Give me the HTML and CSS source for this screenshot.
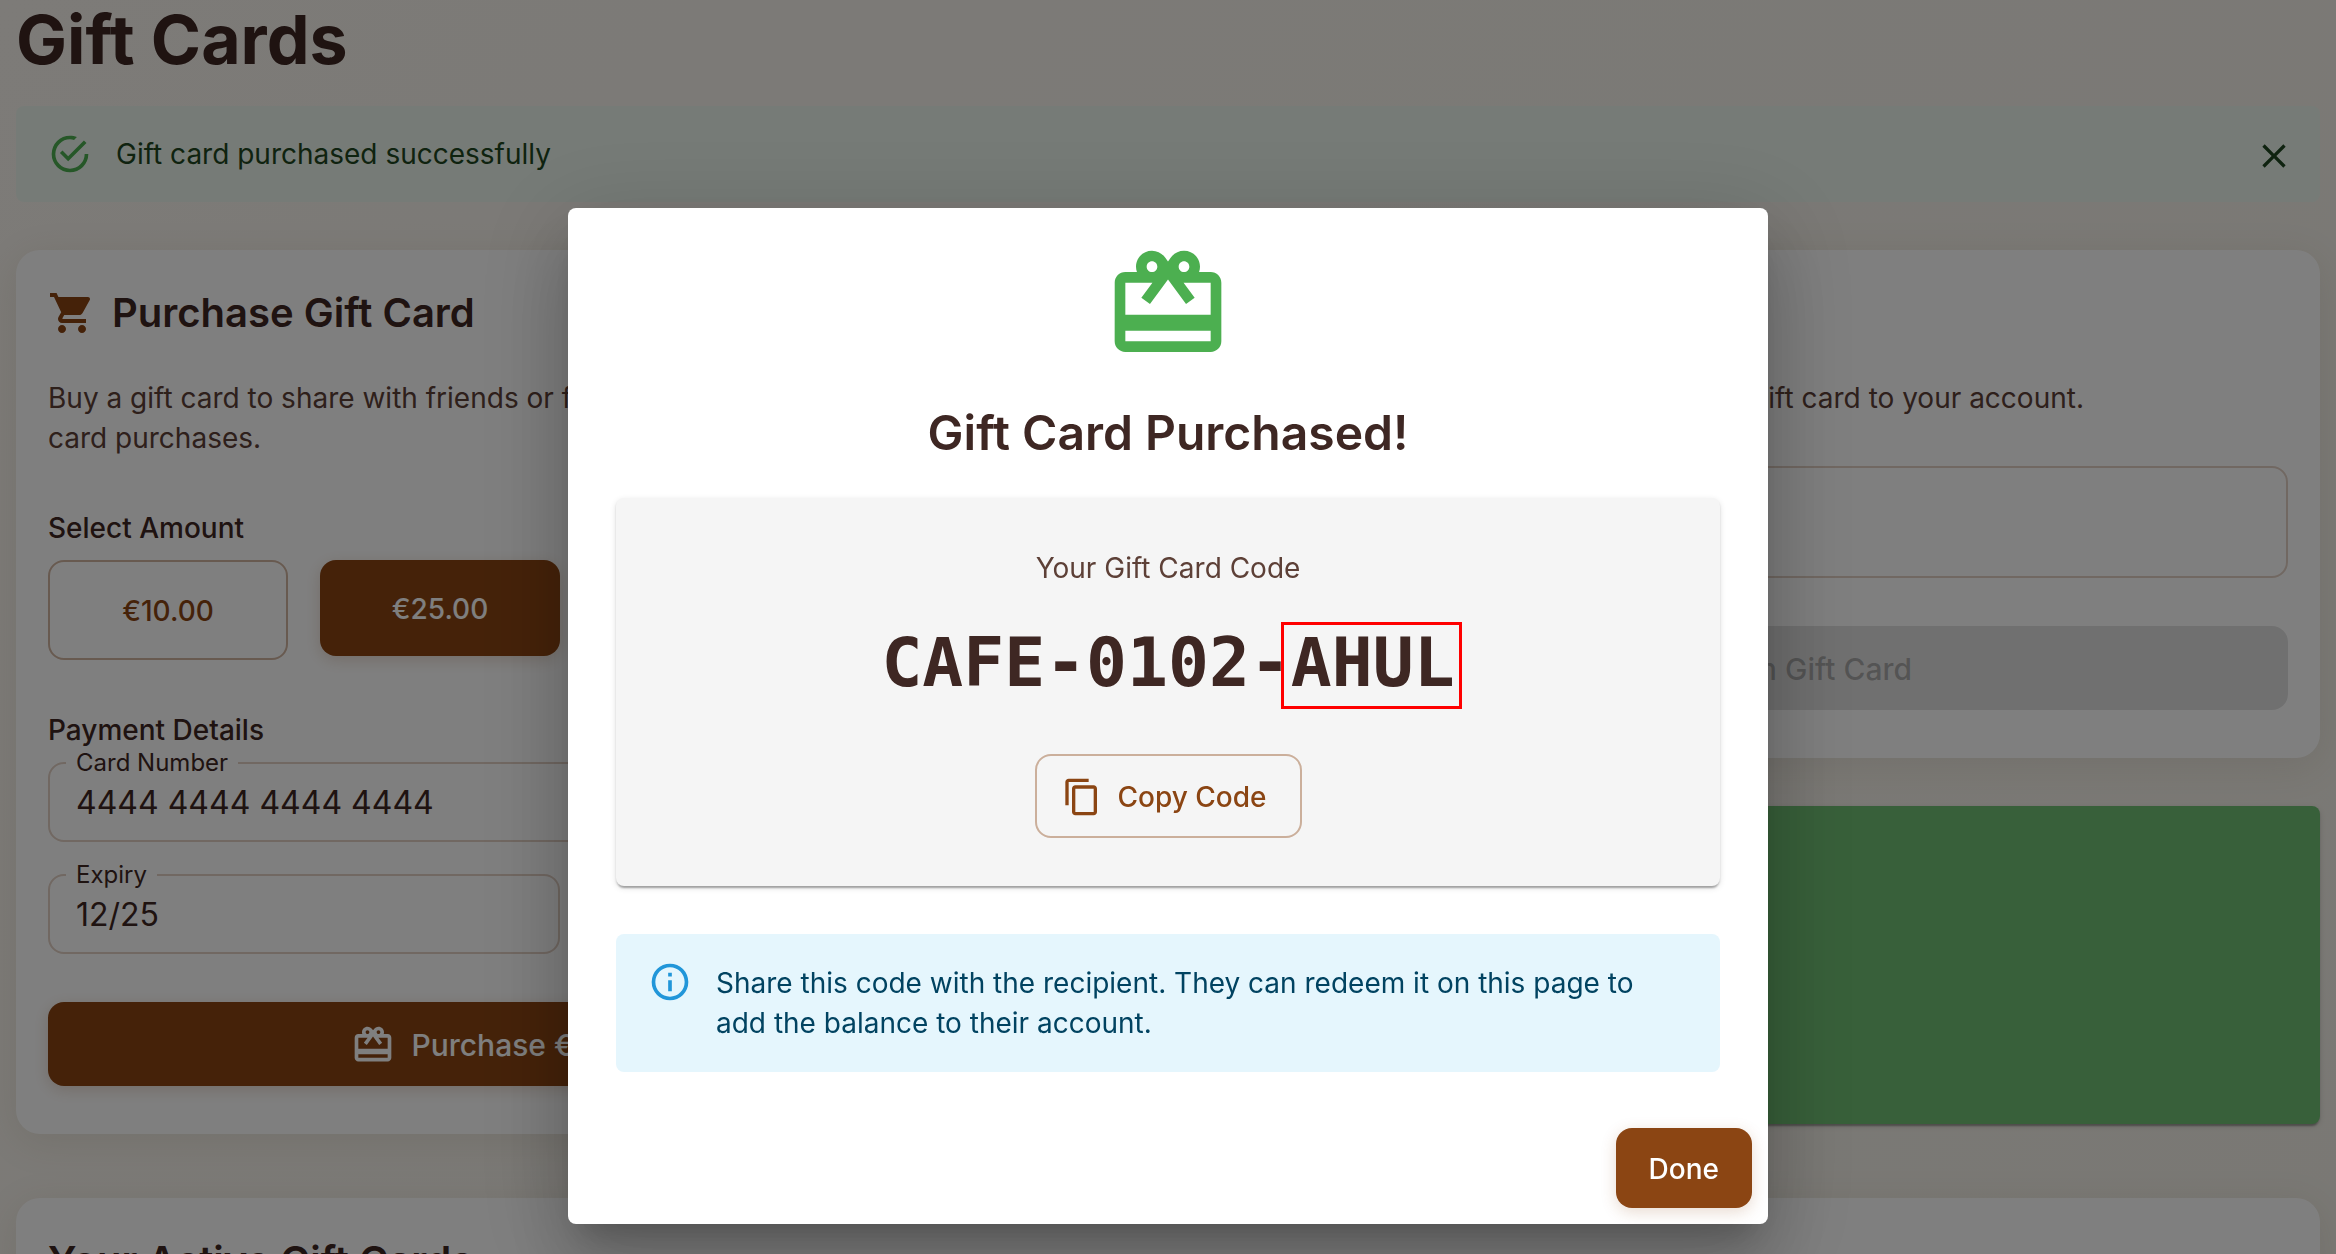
FILE: index.html
```html
<!DOCTYPE html>
<html lang="en">
<head>
  <meta charset="UTF-8">
  <meta name="viewport" content="width=device-width, initial-scale=1.0">
  <title>Gift Cards</title>
  <link rel="stylesheet" href="styles.css">
</head>
<body>
  <main class="page">
    <h1 class="page-title">Gift Cards</h1>

    <div class="alert alert-success" role="status">
      <svg class="alert-icon" viewBox="0 0 24 24"><path d="M20,12A8,8 0 0,1 12,20A8,8 0 0,1 4,12A8,8 0 0,1 12,4C12.76,4 13.5,4.11 14.2,4.31L15.77,2.74C14.61,2.26 13.34,2 12,2A10,10 0 0,0 2,12A10,10 0 0,0 12,22A10,10 0 0,0 22,12M7.91,10.08L6.5,11.5L11,16L21,6L19.59,4.58L11,13.17L7.91,10.08Z"/></svg>
      <div class="alert-message">Gift card purchased successfully</div>
      <button type="button" class="alert-close" aria-label="Close">
        <svg viewBox="0 0 24 24"><path d="M19 6.41L17.59 5 12 10.59 6.41 5 5 6.41 10.59 12 5 17.59 6.41 19 12 13.41 17.59 19 19 17.59 13.41 12z"/></svg>
      </button>
    </div>

    <div class="columns">
      <section class="card">
        <h2 class="card-title">
          <svg viewBox="0 0 24 24"><path d="M7 18c-1.1 0-1.99.9-1.99 2S5.9 22 7 22s2-.9 2-2-.9-2-2-2zM1 2v2h2l3.6 7.59-1.35 2.45c-.16.28-.25.61-.25.96 0 1.1.9 2 2 2h12v-2H7.42c-.14 0-.25-.11-.25-.25l.03-.12.9-1.63h7.45c.75 0 1.41-.41 1.75-1.03l3.58-6.49c.08-.14.12-.31.12-.48 0-.55-.45-1-1-1H5.21l-.94-2H1zm16 16c-1.1 0-1.99.9-1.99 2s.89 2 1.99 2 2-.9 2-2-.9-2-2-2z"/></svg>
          Purchase Gift Card
        </h2>
        <p class="card-text">Buy a gift card to share with friends or family. Gift cards can be used for loyalty card purchases.</p>

        <h3 class="subtitle">Select Amount</h3>
        <div class="amounts">
          <button type="button" class="btn btn-outlined btn-amount">€10.00</button>
          <button type="button" class="btn btn-contained btn-amount">€25.00</button>
          <button type="button" class="btn btn-outlined btn-amount">€50.00</button>
          <button type="button" class="btn btn-outlined btn-amount">€100.00</button>
        </div>

        <h3 class="subtitle">Payment Details</h3>
        <form class="payment">
          <div class="field field-wide">
            <label for="cardNumber">Card Number</label>
            <input type="text" id="cardNumber" value="4444 4444 4444 4444">
          </div>
          <div class="field">
            <label for="expiry">Expiry</label>
            <input type="text" id="expiry" value="12/25">
          </div>
          <div class="field">
            <label for="cvv">CVV</label>
            <input type="text" id="cvv" value="123">
          </div>
        </form>
        <button type="button" class="btn btn-contained btn-large">
          <svg viewBox="0 0 24 24"><path d="M20 6h-2.18c.11-.31.18-.65.18-1 0-1.66-1.34-3-3-3-1.05 0-1.96.54-2.5 1.35l-.5.67-.5-.68C10.96 2.54 10.05 2 9 2 7.34 2 6 3.34 6 5c0 .35.07.69.18 1H4c-1.11 0-1.99.89-1.99 2L2 19c0 1.11.89 2 2 2h16c1.11 0 2-.89 2-2V8c0-1.11-.89-2-2-2zm-5-2c.55 0 1 .45 1 1s-.45 1-1 1-1-.45-1-1 .45-1 1-1zM9 4c.55 0 1 .45 1 1s-.45 1-1 1-1-.45-1-1 .45-1 1-1zm11 15H4v-2h16v2zm0-5H4V8h5.08L7 10.83 8.62 12 11 8.76l1-1.36 1 1.36L15.38 12 17 10.83 14.92 8H20v6z"/></svg>
          Purchase €25.00 Gift Card
        </button>
      </section>

      <div class="side">
        <section class="card">
          <h2 class="card-title">Redeem Gift Card</h2>
          <p class="card-text">Enter the gift card code to redeem that gift card to your account.</p>
          <div class="field field-redeem">
            <input type="text" aria-label="Gift card code">
          </div>
          <button type="button" class="btn btn-large btn-disabled" disabled>
            <svg viewBox="0 0 24 24"><path d="M9 16.17L4.83 12l-1.42 1.41L9 19 21 7l-1.41-1.41z"/></svg>
            Redeem Gift Card
          </button>
        </section>
        <section class="balance" aria-label="Gift card balance"></section>
      </div>
    </div>

    <section class="card">
      <h2 class="card-title">Your Active Gift Cards</h2>
    </section>
  </main>

  <div class="backdrop">
    <div class="dialog" role="dialog" aria-modal="true" aria-labelledby="dialogTitle">
      <div class="dialog-content">
        <svg class="dialog-icon" viewBox="0 0 24 24"><path d="M20 6h-2.18c.11-.31.18-.65.18-1 0-1.66-1.34-3-3-3-1.05 0-1.96.54-2.5 1.35l-.5.67-.5-.68C10.96 2.54 10.05 2 9 2 7.34 2 6 3.34 6 5c0 .35.07.69.18 1H4c-1.11 0-1.99.89-1.99 2L2 19c0 1.11.89 2 2 2h16c1.11 0 2-.89 2-2V8c0-1.11-.89-2-2-2zm-5-2c.55 0 1 .45 1 1s-.45 1-1 1-1-.45-1-1 .45-1 1-1zM9 4c.55 0 1 .45 1 1s-.45 1-1 1-1-.45-1-1 .45-1 1-1zm11 15H4v-2h16v2zm0-5H4V8h5.08L7 10.83 8.62 12 11 8.76l1-1.36 1 1.36L15.38 12 17 10.83 14.92 8H20v6z"/></svg>
        <h2 class="dialog-title" id="dialogTitle">Gift Card Purchased!</h2>

        <div class="code-box">
          <div class="code-label">Your Gift Card Code</div>
          <div class="code">CAFE-0102-<span class="code-mark">AHUL</span></div>
          <button type="button" class="btn btn-outlined">
            <svg viewBox="0 0 24 24"><path d="M16 1H4c-1.1 0-2 .9-2 2v14h2V3h12V1zm3 4H8c-1.1 0-2 .9-2 2v14c0 1.1.9 2 2 2h11c1.1 0 2-.9 2-2V7c0-1.1-.9-2-2-2zm0 16H8V7h11v14z"/></svg>
            Copy Code
          </button>
        </div>

        <div class="alert alert-info">
          <svg class="alert-icon" viewBox="0 0 24 24"><path d="M11,9H13V7H11M12,20C7.59,20 4,16.41 4,12C4,7.59 7.59,4 12,4C16.41,4 20,7.59 20,12C20,16.41 16.41,20 12,20M12,2A10,10 0 0,0 2,12A10,10 0 0,0 12,22A10,10 0 0,0 22,12A10,10 0 0,0 12,2M11,17H13V11H11V17Z"/></svg>
          <div class="alert-message">Share this code with the recipient. They can redeem it on this page to add the balance to their account.</div>
        </div>
      </div>
      <div class="dialog-actions">
        <button type="button" class="btn btn-contained">Done</button>
      </div>
    </div>
  </div>
</body>
</html>
```

FILE: styles.css
```css
* {
  box-sizing: border-box;
}

body {
  margin: 0;
  height: 100vh;
  overflow: hidden; /* the page does not scroll while the dialog is open */
  font-family: Inter, "Liberation Sans", sans-serif;
  font-size: 28px;
  line-height: 40px;
  color: #3e2723;
  background: linear-gradient(135deg, #faf6f0, #f4f1e9);
}

h1, h2, h3, p {
  margin: 0;
}

svg {
  display: block;
  flex: none;
  fill: currentColor;
}

.page {
  padding: 0 16px;
}

.page-title {
  font-size: 68px;
  font-weight: 700;
  line-height: 78px;
  margin-bottom: 28px;
}

/* Alerts */
.alert {
  display: flex;
  align-items: flex-start;
  padding: 12px 32px;
  border-radius: 8px;
}

.alert-icon {
  width: 44px;
  height: 44px;
  margin: 14px 24px 14px 0;
}

.alert-message {
  flex: 1;
  padding: 16px 0;
}

.alert-success {
  margin-bottom: 48px;
  background-color: #edf7ef;
  color: #1e4620;
}

.alert-success .alert-icon {
  color: #4caf50;
}

.alert-info {
  background-color: #e5f6fd;
  color: #014361;
}

.alert-info .alert-icon {
  color: #2196d9;
}

.alert-info .alert-message {
  padding: 17px 0;
}

.alert-close {
  margin: 8px -16px 0 32px;
  padding: 10px;
  border: none;
  border-radius: 50%;
  background: none;
  color: inherit;
  cursor: pointer;
}

.alert-close svg {
  width: 40px;
  height: 40px;
}

/* Cards */
.columns {
  display: grid;
  grid-template-columns: 1fr 1fr;
  align-items: start;
  gap: 64px;
  margin-bottom: 64px;
}

.side {
  display: flex;
  flex-direction: column;
  gap: 48px;
}

.card {
  padding: 32px 32px 48px;
  border-radius: 24px;
  background-color: #fff;
  box-shadow: 0 8px 40px rgba(93, 64, 25, 0.1);
}

.card-title {
  display: flex;
  align-items: center;
  gap: 16px;
  margin-bottom: 34px;
  font-size: 40px;
  font-weight: 600;
  line-height: 62px;
}

.card-title svg {
  width: 48px;
  height: 48px;
  color: #8b4513;
}

.card-text {
  margin-bottom: 48px;
  color: #5d4037;
}

.subtitle {
  margin-bottom: 10px;
  font-size: 28px;
  font-weight: 500;
  line-height: 44px;
}

.balance {
  min-height: 318px;
  border-radius: 8px;
  background-color: #70c174;
  box-shadow: 0 4px 2px -2px rgba(0, 0, 0, 0.2), 0 2px 2px rgba(0, 0, 0, 0.14), 0 2px 6px rgba(0, 0, 0, 0.12);
}

/* Buttons */
.btn {
  display: inline-flex;
  align-items: center;
  justify-content: center;
  gap: 16px;
  padding: 17px 33px 15px;
  border: none;
  border-radius: 16px;
  background: none;
  font-family: inherit;
  font-size: 28px;
  font-weight: 500;
  line-height: 48px;
  cursor: pointer;
}

.btn svg {
  width: 40px;
  height: 40px;
  margin-left: -8px;
}

.btn-contained {
  background-color: #8b4513;
  color: #fff;
  box-shadow: 0 4px 16px rgba(139, 69, 19, 0.2);
}

.btn-outlined {
  border: 2px solid rgba(139, 69, 19, 0.4);
  color: #8b4513;
}

.btn-large {
  width: 100%;
  font-size: 30px;
  line-height: 52px;
}

.btn-large svg {
  width: 44px;
  height: 44px;
}

.btn-disabled {
  background-color: rgba(0, 0, 0, 0.12);
  color: rgba(0, 0, 0, 0.26);
}

.amounts {
  display: grid;
  grid-template-columns: repeat(4, 1fr);
  align-items: start;
  gap: 32px;
  margin-bottom: 48px;
}

.btn-amount {
  padding: 25px 16px 23px;
}

/* Form fields */
.payment {
  display: grid;
  grid-template-columns: 1fr 1fr;
  gap: 32px;
  margin-bottom: 48px;
}

.field {
  position: relative;
}

.field-wide {
  grid-column: 1 / -1;
}

.field input {
  display: block;
  width: 100%;
  height: 80px;
  padding: 0 26px;
  border: 2px solid rgba(139, 69, 19, 0.25);
  border-radius: 16px;
  background: none;
  font-family: inherit;
  font-size: 32px;
  color: inherit;
}

.field-redeem {
  margin-bottom: 48px;
}

.field-redeem input {
  height: 112px;
}

/* label sits on the border of the field */
.field label {
  position: absolute;
  top: -14px;
  left: 18px;
  padding: 0 10px;
  background-color: #fff;
  font-size: 24px;
  line-height: 30px;
}

/* Dialog */
.backdrop {
  position: fixed;
  inset: 0;
  display: flex;
  justify-content: center;
  align-items: flex-start;
  padding-top: 208px;
  background-color: rgba(0, 0, 0, 0.5);
}

.dialog {
  width: 100%;
  max-width: 1200px;
  border-radius: 8px;
  background-color: #fff;
  box-shadow: 0 22px 30px -14px rgba(0, 0, 0, 0.2), 0 48px 76px 6px rgba(0, 0, 0, 0.14), 0 18px 92px 16px rgba(0, 0, 0, 0.12);
}

.dialog-content {
  padding: 32px 48px 40px;
}

.dialog-icon {
  width: 128px;
  height: 128px;
  margin: 0 auto 32px;
  color: #4caf50;
}

.dialog-title {
  margin-bottom: 32px;
  font-size: 48px;
  font-weight: 600;
  line-height: 66px;
  text-align: center;
}

.code-box {
  margin-bottom: 48px;
  padding: 48px;
  border-radius: 8px;
  background-color: #f5f5f5;
  box-shadow: 0 4px 2px -2px rgba(0, 0, 0, 0.2), 0 2px 2px rgba(0, 0, 0, 0.14), 0 2px 6px rgba(0, 0, 0, 0.12);
  text-align: center;
}

.code-label {
  color: #5d4037;
  line-height: 44px;
}

.code {
  margin: 32px 0 50px;
  font-family: "DejaVu Sans Mono", monospace;
  font-size: 68px;
  font-weight: 700;
  line-height: 82px;
}

.code-mark {
  position: relative;
}

/* red frame round the last group of the code */
.code-mark::after {
  content: "";
  position: absolute;
  inset: -1px -7px -7px -10px;
  border: 3px solid #ff0000;
}

.dialog-actions {
  display: flex;
  justify-content: flex-end;
  padding: 16px;
}
```
